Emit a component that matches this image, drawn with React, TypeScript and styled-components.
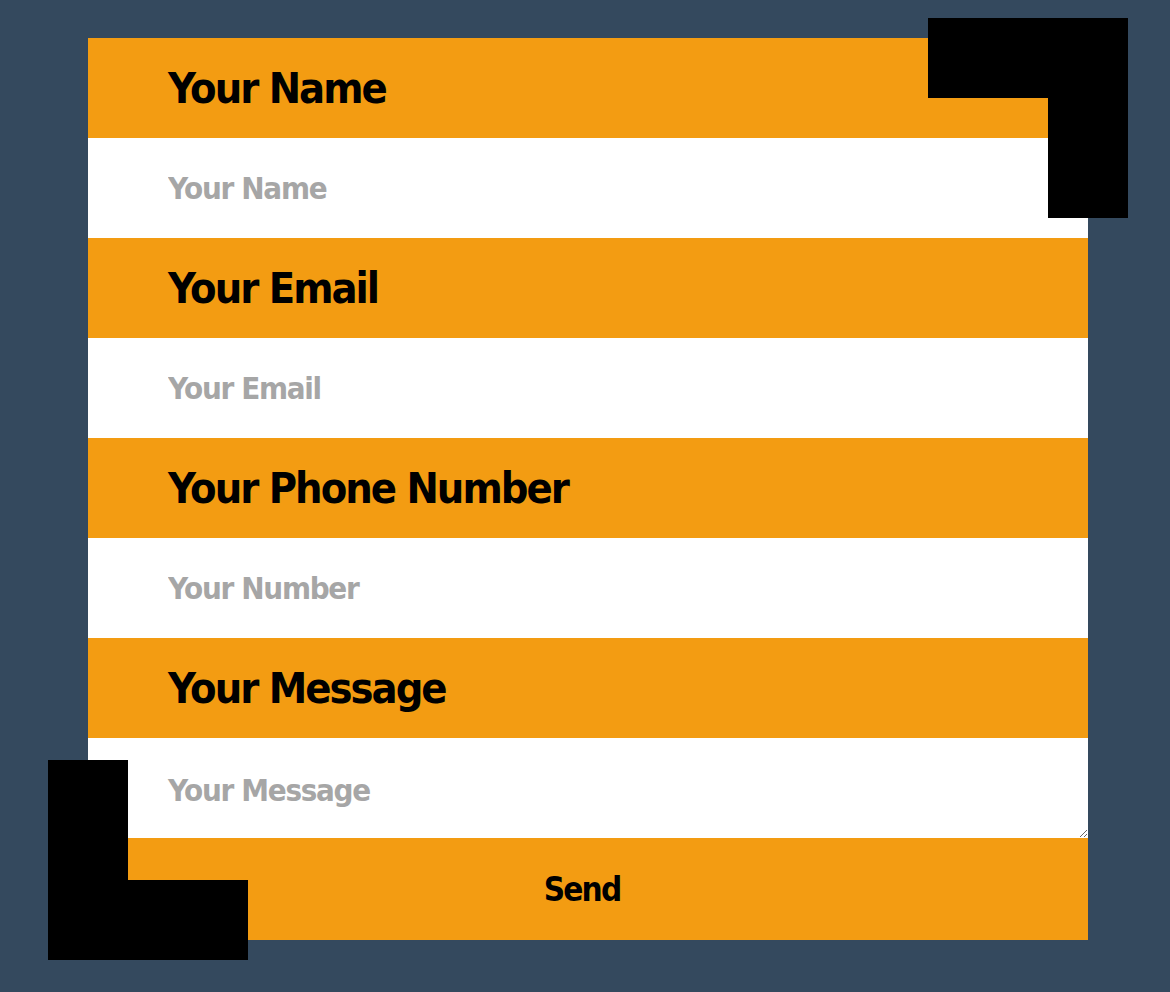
import React from 'react';
import styled, { createGlobalStyle } from 'styled-components';

const GlobalStyle = createGlobalStyle`
  html, body {
    margin: 0;
    padding: 0;
    background-color: #34495e;
  }
  body {
    font-family: "DejaVu Sans Condensed", "Liberation Sans", sans-serif;
    font-weight: bold;
  }
`;

const Page = styled.div`
  min-height: 992px;
  padding: 38px 0 0 88px;
  box-sizing: border-box;
`;

const Form = styled.form`
  position: relative;
  width: 1000px;
  display: flex;
  flex-direction: column;

  &::before,
  &::after {
    content: '';
    position: absolute;
    width: 200px;
    height: 200px;
    box-sizing: border-box;
    pointer-events: none;
    z-index: 2;
  }

  &::before {
    top: -20px;
    right: -40px;
    border-top: 80px solid #000;
    border-right: 80px solid #000;
  }

  &::after {
    bottom: -20px;
    left: -40px;
    border-left: 80px solid #000;
    border-bottom: 80px solid #000;
  }
`;

const Label = styled.label`
  display: flex;
  align-items: center;
  height: 100px;
  padding-left: 80px;
  background-color: #f39c12;
  color: #000;
  font-size: 43px;
  letter-spacing: -2px;
  font-family: inherit;
  font-weight: bold;
`;

const fieldStyles = `
  display: block;
  width: 100%;
  box-sizing: border-box;
  border: none;
  outline: none;
  margin: 0;
  background: #fff;
  padding: 0 0 0 80px;
  font-family: "DejaVu Sans Condensed", "Liberation Sans", sans-serif;
  font-weight: bold;
  font-size: 31px;
  letter-spacing: -1.3px;
  color: #000;

  &::placeholder {
    color: #a6a6a6;
    opacity: 1;
  }
`;

const Input = styled.input`
  ${fieldStyles}
  height: 100px;
`;

const TextArea = styled.textarea`
  ${fieldStyles}
  height: 100px;
  padding-top: 37px;
  line-height: 1;
  resize: vertical;
`;

const SendButton = styled.button`
  display: block;
  width: 100%;
  height: 102px;
  border: none;
  margin: 0;
  padding: 0 12px 0 0;
  background-color: #f39c12;
  color: #000;
  font-family: inherit;
  font-weight: bold;
  font-size: 33px;
  letter-spacing: -1.8px;
  cursor: pointer;
`;

const fields = [
  { id: 'name', label: 'Your Name', placeholder: 'Your Name', type: 'text' },
  { id: 'email', label: 'Your Email', placeholder: 'Your Email', type: 'email' },
  { id: 'phone', label: 'Your Phone Number', placeholder: 'Your Number', type: 'tel' },
];

export default function App() {
  return (
    <>
      <GlobalStyle />
      <Page>
        <Form onSubmit={(e) => e.preventDefault()}>
          {fields.map((f) => (
            <React.Fragment key={f.id}>
              <Label htmlFor={f.id}>{f.label}</Label>
              <Input id={f.id} type={f.type} placeholder={f.placeholder} />
            </React.Fragment>
          ))}
          <Label htmlFor="message">Your Message</Label>
          <TextArea id="message" placeholder="Your Message" />
          <SendButton type="submit">Send</SendButton>
        </Form>
      </Page>
    </>
  );
}
